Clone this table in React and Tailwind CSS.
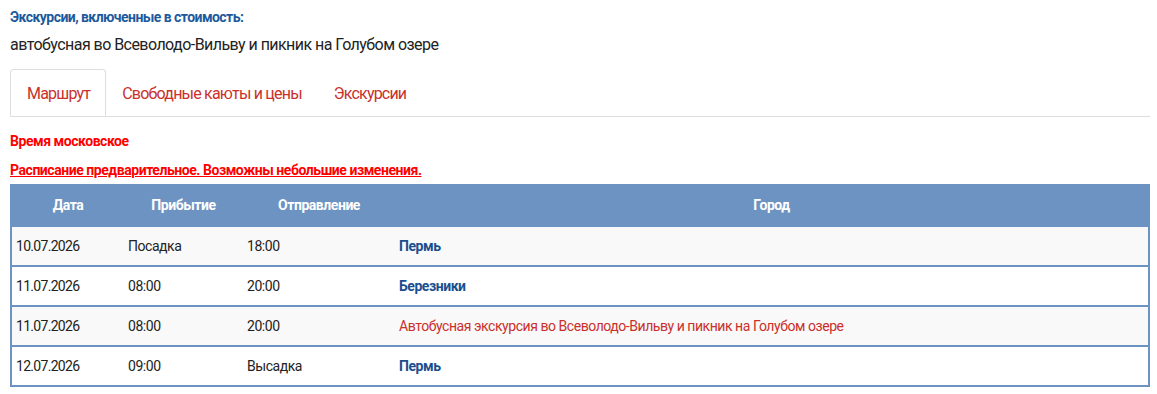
const rows = [
    { date: '10.07.2026', arrive: 'Посадка', depart: '18:00', city: 'Пермь' },
    { date: '11.07.2026', arrive: '08:00', depart: '20:00', city: 'Березники' },
    { date: '11.07.2026', arrive: '08:00', depart: '20:00', excursion: 'Автобусная экскурсия во Всеволодо-Вильву и пикник на Голубом озере' },
    { date: '12.07.2026', arrive: '09:00', depart: 'Высадка', city: 'Пермь' },
];

export default function App() {
    return (
        <div className="bg-white min-h-screen px-[10px] pt-[8px] text-[#222]" style={{ fontFamily: 'Roboto, "Liberation Sans", sans-serif' }}>
            {/* Included excursions */}
            <p className="text-[14px] font-bold text-[#1d5a9c] leading-[18px] tracking-[-0.55px]">
                Экскурсии, включенные в стоимость:
            </p>
            <p className="text-[16px] leading-[22px] mt-[8px] tracking-[-0.55px]">
                автобусная во Всеволодо-Вильву и пикник на Голубом озере
            </p>

            {/* Tabs */}
            <div className="flex mt-[13px] mr-[-3px] border-b border-[#ddd] tracking-[-0.8px]">
                <div className="h-[47px] pl-[16px] pr-[15px] pt-[3px] flex items-center text-[16px] text-[#c9302c] bg-white border border-[#ddd] border-b-white rounded-t-[4px] -mb-px">
                    Маршрут
                </div>
                <div className="h-[47px] px-[16px] pt-[3px] flex items-center text-[16px] text-[#c9302c]">
                    Свободные каюты и цены
                </div>
                <div className="h-[47px] px-[16px] pt-[3px] flex items-center text-[16px] text-[#c9302c]">
                    Экскурсии
                </div>
            </div>

            {/* Notes */}
            <p className="mt-[15px] text-[14px] font-bold text-[#ff0000] leading-[18px] tracking-[-0.45px]">
                Время московское
            </p>
            <p className="mt-[11px] text-[14px] font-bold text-[#ff0000] leading-[18px] underline tracking-[-0.45px]">
                Расписание предварительное. Возможны небольшие изменения.
            </p>

            {/* Schedule */}
            <table className="mt-[5px] w-[1140px] border-collapse border-2 border-[#6d93c2] text-[14px] tracking-[-0.45px]">
                <thead>
                    <tr className="bg-[#6d93c2] text-white h-[41px]">
                        <th className="w-[113px] font-bold">Дата</th>
                        <th className="w-[119px] font-bold">Прибытие</th>
                        <th className="w-[152px] font-bold">Отправление</th>
                        <th className="font-bold">Город</th>
                    </tr>
                </thead>
                <tbody>
                    {rows.map((r, i) => (
                        <tr key={i} className={`h-[40px] border-t-2 border-[#6d93c2] ${i % 2 === 0 ? 'bg-[#f9f9f9]' : 'bg-white'}`}>
                            <td className="px-[4px] tracking-[-0.7px]">{r.date}</td>
                            <td className="px-[4px]">{r.arrive}</td>
                            <td className="px-[4px]">{r.depart}</td>
                            <td className="px-[4px]">
                                {r.city ? (
                                    <span className="font-bold text-[#1a4f8f]">{r.city}</span>
                                ) : (
                                    <span className="text-[#c9302c]">{r.excursion}</span>
                                )}
                            </td>
                        </tr>
                    ))}
                </tbody>
            </table>
        </div>
    );
}
